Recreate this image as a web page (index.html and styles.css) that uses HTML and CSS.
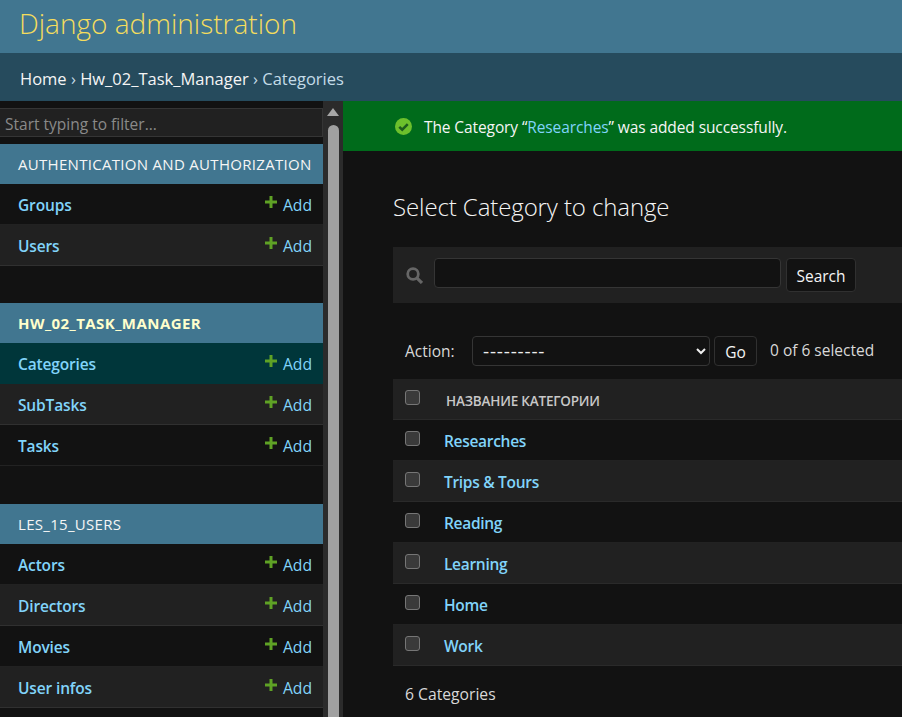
FILE: index.html
```html
<!doctype html>
<html>
<head>
<meta charset="utf-8" />
<title>Select Category to change | Django site admin</title>
<link rel="stylesheet" href="styles.css">
</head>
<body>
<div id="header"><span class="brand">Django administration</span></div>
<div class="breadcrumbs"><a href="#">Home</a> › <a href="#">Hw_02_Task_Manager</a> › Categories</div>
<div id="main">
  <div id="nav-sidebar">
    <div class="nav-list">
      <input class="nav-filter" type="text" placeholder="Start typing to filter...">
      <div class="module">
        <div class="caption">AUTHENTICATION AND AUTHORIZATION</div>
        <div class="row"><a class="model" href="#">Groups</a><a class="add" href="#"><svg viewBox="0 0 12 12"><path d="M4.5 0h3v4.5H12v3H7.5V12h-3V7.5H0v-3h4.5z"/></svg>Add</a></div>
        <div class="row alt"><a class="model" href="#">Users</a><a class="add" href="#"><svg viewBox="0 0 12 12"><path d="M4.5 0h3v4.5H12v3H7.5V12h-3V7.5H0v-3h4.5z"/></svg>Add</a></div>
      </div>
      <div class="module wide">
        <div class="caption current">HW_02_TASK_MANAGER</div>
        <div class="row selected"><a class="model" href="#">Categories</a><a class="add" href="#"><svg viewBox="0 0 12 12"><path d="M4.5 0h3v4.5H12v3H7.5V12h-3V7.5H0v-3h4.5z"/></svg>Add</a></div>
        <div class="row alt"><a class="model" href="#">SubTasks</a><a class="add" href="#"><svg viewBox="0 0 12 12"><path d="M4.5 0h3v4.5H12v3H7.5V12h-3V7.5H0v-3h4.5z"/></svg>Add</a></div>
        <div class="row"><a class="model" href="#">Tasks</a><a class="add" href="#"><svg viewBox="0 0 12 12"><path d="M4.5 0h3v4.5H12v3H7.5V12h-3V7.5H0v-3h4.5z"/></svg>Add</a></div>
      </div>
      <div class="module">
        <div class="caption">LES_15_USERS</div>
        <div class="row"><a class="model" href="#">Actors</a><a class="add" href="#"><svg viewBox="0 0 12 12"><path d="M4.5 0h3v4.5H12v3H7.5V12h-3V7.5H0v-3h4.5z"/></svg>Add</a></div>
        <div class="row alt"><a class="model" href="#">Directors</a><a class="add" href="#"><svg viewBox="0 0 12 12"><path d="M4.5 0h3v4.5H12v3H7.5V12h-3V7.5H0v-3h4.5z"/></svg>Add</a></div>
        <div class="row"><a class="model" href="#">Movies</a><a class="add" href="#"><svg viewBox="0 0 12 12"><path d="M4.5 0h3v4.5H12v3H7.5V12h-3V7.5H0v-3h4.5z"/></svg>Add</a></div>
        <div class="row alt"><a class="model" href="#">User infos</a><a class="add" href="#"><svg viewBox="0 0 12 12"><path d="M4.5 0h3v4.5H12v3H7.5V12h-3V7.5H0v-3h4.5z"/></svg>Add</a></div>
      </div>
    </div>
    <div class="scrollbar"><span class="arrow"></span><span class="thumb"></span></div>
  </div>
  <div id="content-wrap">
    <div class="success">
      <svg class="ok" viewBox="0 0 16 16"><circle cx="8" cy="8" r="8" fill="#6cc02c"/><path d="M4 8.3l2.8 2.7L12 5.8" fill="none" stroke="#1c5c1c" stroke-width="2.4"/></svg>
      <span class="success-text">The Category “<a href="#">Researches</a>” was added successfully.</span>
    </div>
    <div id="content">
      <h1>Select Category to change</h1>
      <div class="toolbar">
        <svg class="loupe" viewBox="0 0 16 16"><circle cx="6.6" cy="6.6" r="5" fill="none" stroke="#666" stroke-width="2.6"/><path d="M10.4 10.4L15 15" stroke="#666" stroke-width="3"/></svg>
        <input class="search" type="text">
        <button class="btn search-btn">Search</button>
      </div>
      <div class="actions">
        <label>Action:</label>
        <select class="action-select"><option>---------</option></select>
        <button class="btn go">Go</button>
        <span class="counter">0 of 6 selected</span>
      </div>
      <div class="results">
        <div class="result head"><input type="checkbox"><span class="col-title">НАЗВАНИЕ КАТЕГОРИИ</span></div>
        <div class="result"><input type="checkbox"><a href="#">Researches</a></div>
        <div class="result alt"><input type="checkbox"><a href="#">Trips &amp; Tours</a></div>
        <div class="result"><input type="checkbox"><a href="#">Reading</a></div>
        <div class="result alt"><input type="checkbox"><a href="#">Learning</a></div>
        <div class="result"><input type="checkbox"><a href="#">Home</a></div>
        <div class="result alt"><input type="checkbox"><a href="#">Work</a></div>
      </div>
      <p class="paginator">6 Categories</p>
    </div>
  </div>
</div>
</body>
</html>
```

FILE: styles.css
```css
html, body { margin: 0; height: 717px; overflow: hidden; }
body { background: #121212; color: #eee; font-family: "Open Sans", "Noto Sans", sans-serif; font-size: 15px; color-scheme: dark; }
a { color: #81d4fa; text-decoration: none; }

#header { height: 53px; box-sizing: border-box; padding-left: 19px; background: #417690; }
.brand { font-size: 28px; font-weight: 300; line-height: 46px; color: #f5dd5d; }
.breadcrumbs { height: 48px; line-height: 52px; padding-left: 20px; background: #264b5d; color: #c4dce8; font-size: 16.5px; }
.breadcrumbs a { color: #f5f5f5; }

#main { display: flex; height: 616px; }
#nav-sidebar { display: flex; width: 343px; flex: none; }
.nav-list { width: 323px; flex: none; padding-top: 7px; box-sizing: border-box; }
.nav-filter { display: block; width: 100%; height: 29px; box-sizing: border-box; margin: 0 0 7px; padding: 2px 5px 0; background: #212121; border: 1px solid #353535; border-left: 0; color: #eee; font: 15.5px "Open Sans", sans-serif; outline: 0; }
.nav-filter::placeholder { color: #8a8a8a; opacity: 1; }
.module { margin-bottom: 37px; }
.module.wide { margin-bottom: 38px; }
.caption { height: 40px; line-height: 40px; padding-left: 18px; background: #417690; color: #f5f5f5; font-size: 15px; letter-spacing: 0.3px; white-space: nowrap; }
.caption.current { color: #ffffcc; font-weight: 700; letter-spacing: 0.45px; }
.row { display: flex; justify-content: space-between; height: 40px; line-height: 42px; padding: 0 11px 0 18px; border-bottom: 1px solid #222; background: #121212; }
.row.alt { background: #212121; border-bottom-color: #303030; }
.row.selected { background: #00363a; border-bottom-color: #00363a; }
.model { font-weight: 600; font-size: 15.5px; letter-spacing: -0.15px; }
.add { font-size: 15.7px; }
.add svg { width: 12px; height: 12px; margin-right: 6px; fill: #5fa225; position: relative; top: -3px; }

.scrollbar { width: 20px; flex: none; display: flex; flex-direction: column; align-items: center; background: #2b2b2b; }
.arrow { width: 0; height: 0; margin-top: 7px; border: 6.5px solid transparent; border-top: 0; border-bottom: 8px solid #a6a6a6; }
.thumb { width: 11px; flex: 1; margin-top: 9px; background: #a0a0a0; border-radius: 6px 6px 0 0; }

#content-wrap { flex: 1; min-width: 0; overflow: hidden; }
.success { display: flex; align-items: center; height: 50px; padding-left: 52px; background: #006b1b; color: #f5f5f5; font-size: 15.5px; letter-spacing: -0.1px; white-space: nowrap; }
.success-text { padding-top: 2px; }
.ok { width: 17px; height: 17px; margin-right: 12px; flex: none; }
#content { padding: 0 0 0 50px; width: 509px; }
h1 { margin: 0; padding-top: 39px; height: 57px; line-height: 34px; font-size: 24px; font-weight: 300; letter-spacing: -0.1px; color: #f5f5f5; white-space: nowrap; }
.toolbar { display: flex; align-items: flex-start; height: 56px; box-sizing: border-box; padding: 11px 0 0 13px; background: #212121; }
.loupe { width: 17px; height: 17px; margin: 9px 11px 0 0; flex: none; }
.search { width: 347px; height: 30px; box-sizing: border-box; margin-right: 5px; background: #121212; border: 1px solid #353535; border-radius: 4px; outline: 0; flex: none; }
.btn { box-sizing: border-box; background: #121212; border: 1px solid #303030; border-radius: 4px; color: #f5f5f5; font: 15.5px "Open Sans", sans-serif; padding: 2px 0 0; }
.search-btn { width: 70px; height: 34px; }
.actions { display: flex; align-items: center; height: 30px; margin-top: 33px; padding-left: 12px; white-space: nowrap; font-size: 15.5px; color: #d8d8d8; }
.actions label { width: 67px; flex: none; }
.action-select { width: 238px; height: 30px; flex: none; background: #121212; border: 1px solid #353535; border-radius: 4px; color: #eee; font: 19px "Open Sans", sans-serif; letter-spacing: 0.8px; padding: 0 6px; margin-right: 4px; }
.go { width: 43px; height: 30px; flex: none; margin-right: 13px; }
.counter { position: relative; top: -1px; }
.results { margin-top: 13px; }
.result { display: flex; align-items: center; height: 41px; box-sizing: border-box; padding: 2px 0 0 12px; border-bottom: 1px solid #222; background: #121212; }
.result.alt, .result.head { background: #212121; border-bottom-color: #2a2a2a; }
.result input { appearance: none; width: 15px; height: 15px; margin: -5px 24px 0 0; flex: none; background: #3a3a3a; border: 1px solid #767676; border-radius: 3px; }
.result a { font-weight: 600; font-size: 15.5px; letter-spacing: -0.3px; }
.col-title { margin: 2px 0 0 2px; font-size: 13.5px; font-weight: 600; color: #c8c8c8; letter-spacing: -0.2px; }
.paginator { margin: 0; padding: 17px 0 0 12px; font-size: 15.7px; color: #d8d8d8; }
```
